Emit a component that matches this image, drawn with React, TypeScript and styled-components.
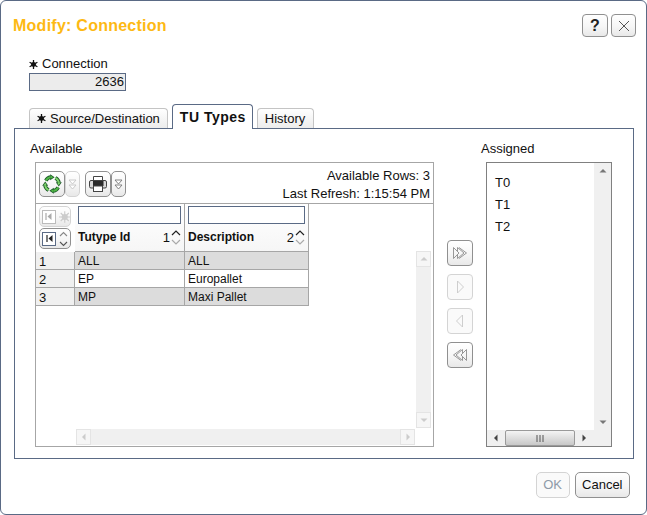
import styled, { createGlobalStyle } from 'styled-components';

const GlobalStyle = createGlobalStyle`
  html, body { margin: 0; padding: 0; background: #fff; }
  body { font-family: "Liberation Sans", Arial, sans-serif; font-size: 13px; color: #111; }
`;

const rows = [
  { id: 'ALL', description: 'ALL' },
  { id: 'EP', description: 'Europallet' },
  { id: 'MP', description: 'Maxi Pallet' },
];

const RequiredStar = () => (
  <StarIcon width="9" height="9" viewBox="0 0 9 9">
    <path d="M4.5 0v9M0.6 2.2l7.8 4.6M0.6 6.8l7.8-4.6" stroke="#111" strokeWidth="1.3" />
    <circle cx="4.5" cy="4.5" r="2.4" fill="#111" />
  </StarIcon>
);

// four green arrows chasing each other round a ring
const RefreshIcon = () => {
  const arcs = [0, 90, 180, 270];
  return (
    <svg width="22" height="22" viewBox="0 0 22 22">
      {arcs.map(angle => (
        <g key={angle} transform={`rotate(${angle} 11 11)`}>
          <path d="M4.8 7.6A7.2 7.2 0 0 1 9.6 4" fill="none" stroke="#1d5a28" strokeWidth="3.6" />
          <path d="M9.2 1.2l4.4 3-4.4 3z" fill="#1d5a28" />
          <path d="M4.8 7.6A7.2 7.2 0 0 1 9.6 4" fill="none" stroke={angle % 180 === 0 ? '#4fb845' : '#7fd66c'} strokeWidth="2" />
          <path d="M9.8 2.6l2.4 1.6-2.4 1.6z" fill={angle % 180 === 0 ? '#4fb845' : '#7fd66c'} />
        </g>
      ))}
    </svg>
  );
};

const PrintIcon = () => (
  <svg width="20" height="18" viewBox="0 0 20 18">
    <path d="M5.5 6V1.5h9V6" fill="#fff" stroke="#444" />
    <rect x="1.5" y="5.5" width="17" height="7.5" rx="1.5" fill="#d8d8d8" stroke="#444" />
    <path d="M5 6h10.5v5H5z" fill="#2b2b2b" />
    <rect x="5.5" y="11" width="9" height="5.5" fill="#fff" stroke="#444" />
  </svg>
);

const DoubleChevron = ({ muted }: { muted?: boolean }) => (
  <svg width="9" height="11" viewBox="0 0 9 11">
    <path d="M1 1h7L4.5 5zM1 6h7L4.5 10z" fill="#fff" stroke={muted ? '#c4c4c4' : '#777'} strokeWidth="0.9" />
  </svg>
);

const FirstIcon = ({ muted }: { muted?: boolean }) => (
  <FirstBox $muted={muted}>
    <svg width="9" height="9" viewBox="0 0 9 9">
      <path d="M2 1v7" stroke={muted ? '#aaa' : '#222'} strokeWidth="1.2" />
      <path d="M7.5 1v7L3.5 4.5z" fill={muted ? '#aaa' : '#222'} />
    </svg>
  </FirstBox>
);

const SortArrows = () => (
  <svg width="10" height="18" viewBox="0 0 10 18">
    <path d="M1 7l4-4 4 4" fill="none" stroke="#222" strokeWidth="1.2" />
    <path d="M1 12l4 4 4-4" fill="none" stroke="#aaa" strokeWidth="1.2" />
  </svg>
);

const MoveIcon = ({ dir, double, muted }: { dir: 'left' | 'right'; double?: boolean; muted?: boolean }) => {
  const stroke = muted ? '#c8c8c8' : '#8c8c8c';
  return (
    <svg width="18" height="18" viewBox="0 0 18 18">
      <g transform={dir === 'left' ? 'translate(18 0) scale(-1 1)' : undefined} fill="none" stroke={stroke} strokeWidth="0.9">
        {double ? (
          <>
            <path d="M2.5 3.5v11l5.5-5.5z" />
            <path d="M6.5 3.5v3.5M6.5 11v3.5l6.5-5.5-6.5-5.5" />
            <path d="M8 3.5l7.5 5.5L8 14.5" />
          </>
        ) : (
          <path d="M6.5 3v12l6-6z" />
        )}
      </g>
    </svg>
  );
};

const Tri = ({ dir, color = '#777' }: { dir: 'up' | 'down' | 'left' | 'right'; color?: string }) => {
  const d = {
    up: 'M1.5 6.5L5 3l3.5 3.5z',
    down: 'M1.5 3.5L5 7l3.5-3.5z',
    left: 'M6.5 1.5L3 5l3.5 3.5z',
    right: 'M3.5 1.5L7 5 3.5 8.5z',
  }[dir];
  return (
    <svg width="10" height="10" viewBox="0 0 10 10">
      <path d={d} fill={color} />
    </svg>
  );
};

const App = () => {
  return (
    <>
      <GlobalStyle />
      <Dialog>
        <TitleBar>
          <Title>Modify: Connection</Title>
          <TitleActions>
            <IconButton><HelpMark>?</HelpMark></IconButton>
            <IconButton $narrow>
              <svg width="12" height="12" viewBox="0 0 12 12">
                <path d="M1 1l10 10M11 1L1 11" stroke="#555" strokeWidth="1" fill="none" />
              </svg>
            </IconButton>
          </TitleActions>
        </TitleBar>

        <Field>
          <FieldLabel><RequiredStar />Connection</FieldLabel>
          <ReadOnlyValue>2636</ReadOnlyValue>
        </Field>

        <TabStrip>
          <Tab $padding="0 7px"><RequiredStar />Source/Destination</Tab>
          <Tab $active $padding="0 6px 0 7px">TU Types</Tab>
          <Tab $padding="0 8px 0 7px">History</Tab>
        </TabStrip>

        <TabPanel>
          <AvailableColumn>
            <ColumnLabel>Available</ColumnLabel>
            <GridBox>
              <Toolbar>
                <ToolGroup>
                  <ToolButton><RefreshIcon /></ToolButton>
                  <MenuButton $muted><DoubleChevron muted /></MenuButton>
                </ToolGroup>
                <ToolGroup>
                  <ToolButton><PrintIcon /></ToolButton>
                  <MenuButton><DoubleChevron /></MenuButton>
                </ToolGroup>
                <ToolbarInfo>
                  <div>Available Rows: 3</div>
                  <div>Last Refresh: 1:15:54 PM</div>
                </ToolbarInfo>
              </Toolbar>

              <GridBody>
                <CornerCell>
                  <CornerButton $muted>
                    <FirstIcon muted />
                    <svg width="12" height="12" viewBox="0 0 12 12">
                      <path d="M6 0v12M0 6h12M1.8 1.8l8.4 8.4M10.2 1.8l-8.4 8.4" stroke="#ccc" strokeWidth="1.2" />
                      <circle cx="6" cy="6" r="3.2" fill="#ccc" />
                    </svg>
                  </CornerButton>
                  <CornerButton>
                    <FirstIcon />
                    <CornerSort>
                      <svg width="9" height="18" viewBox="0 0 9 18">
                        <path d="M1 6l3.5-3.5L8 6" fill="none" stroke="#888" strokeWidth="1.1" />
                        <path d="M1 12l3.5 3.5L8 12" fill="none" stroke="#555" strokeWidth="1.1" />
                      </svg>
                    </CornerSort>
                  </CornerButton>
                </CornerCell>

                <HeaderRow>
                  <HeaderCell $width={110}>
                    <FilterInput $width={103} />
                    <HeaderLine>
                      <HeaderName>Tutype Id</HeaderName>
                      <SortIndex>1</SortIndex>
                      <SortArrows />
                    </HeaderLine>
                  </HeaderCell>
                  <HeaderCell $width={124}>
                    <FilterInput $width={117} />
                    <HeaderLine>
                      <HeaderName>Description</HeaderName>
                      <SortIndex>2</SortIndex>
                      <SortArrows />
                    </HeaderLine>
                  </HeaderCell>
                </HeaderRow>
                <HeaderFiller />

                <RowNumbers>
                  {rows.map((row, i) => (
                    <RowNumber key={row.id}>{i + 1}</RowNumber>
                  ))}
                </RowNumbers>

                <DataRows>
                  {rows.map((row, i) => (
                    <DataRow key={row.id} $shaded={i % 2 === 0}>
                      <DataCell $width={110}>{row.id}</DataCell>
                      <DataCell $width={124}>{row.description}</DataCell>
                    </DataRow>
                  ))}
                </DataRows>

                <VerticalTrack>
                  <TrackButton><Tri dir="up" color="#ccc" /></TrackButton>
                  <TrackButton><Tri dir="down" color="#ccc" /></TrackButton>
                </VerticalTrack>

                <BottomSpacer />
                <HorizontalTrack>
                  <TrackButton><Tri dir="left" color="#ccc" /></TrackButton>
                  <TrackButton><Tri dir="right" color="#ccc" /></TrackButton>
                </HorizontalTrack>
              </GridBody>
            </GridBox>
          </AvailableColumn>

          <MoveColumn>
            <MoveButton><MoveIcon dir="right" double /></MoveButton>
            <MoveButton $disabled><MoveIcon dir="right" muted /></MoveButton>
            <MoveButton $disabled><MoveIcon dir="left" muted /></MoveButton>
            <MoveButton><MoveIcon dir="left" double /></MoveButton>
          </MoveColumn>

          <AssignedColumn>
            <ColumnLabel>Assigned</ColumnLabel>
            <ListBox>
              <ListInner>
                <ListItems>
                  <ListItem>T0</ListItem>
                  <ListItem>T1</ListItem>
                  <ListItem>T2</ListItem>
                </ListItems>
                <ListVertical>
                  <Tri dir="up" />
                  <Tri dir="down" />
                </ListVertical>
              </ListInner>
              <ListHorizontal>
                <ListArrow><Tri dir="left" color="#444" /></ListArrow>
                <ListThumb>
                  <svg width="9" height="7" viewBox="0 0 9 7">
                    <path d="M1 0v7M4 0v7M7 0v7" stroke="#555" strokeWidth="1" />
                  </svg>
                </ListThumb>
                <ListArrow><Tri dir="right" color="#444" /></ListArrow>
                <ListCorner />
              </ListHorizontal>
            </ListBox>
          </AssignedColumn>
        </TabPanel>

        <Footer>
          <FooterButton $disabled>OK</FooterButton>
          <FooterButton>Cancel</FooterButton>
        </Footer>
      </Dialog>
    </>
  );
};

const buttonFace = 'linear-gradient(#ffffff 0%, #f6f6f6 55%, #e8e8e8 100%)';

const Dialog = styled.div`
  box-sizing: border-box;
  width: 647px;
  height: 515px;
  border: 1px solid #5a6a85;
  border-radius: 6px;
  background: #fff;
  overflow: hidden;
  display: flex;
  flex-direction: column;
`;

const TitleBar = styled.div`
  height: 36px;
  padding: 13px 10px 0 12px;
  display: flex;
  justify-content: space-between;
  align-items: flex-start;
`;

const Title = styled.div`
  font-size: 16px;
  font-weight: 700;
  letter-spacing: 0.25px;
  color: #fdb913;
  line-height: 23px;
`;

const TitleActions = styled.div`
  display: flex;
  gap: 3px;
`;

const IconButton = styled.div<{ $narrow?: boolean }>`
  box-sizing: border-box;
  width: ${props => (props.$narrow ? '25px' : '26px')};
  height: 23px;
  border: 1px solid #909090;
  border-radius: 4px;
  background: ${buttonFace};
  display: flex;
  align-items: center;
  justify-content: center;
`;

const HelpMark = styled.span`
  font-size: 16px;
  font-weight: 700;
  color: #222;
`;

const Field = styled.div`
  margin: 5px 0 0 28px;
`;

const StarIcon = styled.svg`
  margin-right: 4px;
  flex: none;
`;

const FieldLabel = styled.div`
  height: 18px;
  line-height: 18px;
  display: flex;
  align-items: center;
`;

const ReadOnlyValue = styled.div`
  box-sizing: border-box;
  width: 97px;
  height: 18px;
  border: 1px solid #5a6a85;
  background: #ececec;
  line-height: 16px;
  text-align: right;
  padding-right: 1px;
`;

const TabStrip = styled.div`
  margin: 13px 0 0 28px;
  height: 24px;
  display: flex;
  align-items: flex-end;
  gap: 4px;
`;

const Tab = styled.div<{ $active?: boolean; $padding: string }>`
  box-sizing: border-box;
  height: ${props => (props.$active ? '25px' : '20px')};
  padding: ${props => props.$padding};
  border: 1px solid ${props => (props.$active ? '#5a6a85' : '#c4c4c4')};
  border-bottom: none;
  border-radius: 4px 4px 0 0;
  background: ${props => (props.$active ? '#fff' : 'linear-gradient(#ffffff, #ececec)')};
  font-weight: ${props => (props.$active ? 700 : 400)};
  font-size: ${props => (props.$active ? '14px' : '13px')};
  letter-spacing: ${props => (props.$active ? '0.5px' : '0')};
  display: flex;
  align-items: center;
  position: relative;
  z-index: ${props => (props.$active ? 1 : 0)};
  margin-bottom: ${props => (props.$active ? '-1px' : '0')};
`;

const TabPanel = styled.div`
  box-sizing: border-box;
  margin-left: 13px;
  width: 620px;
  height: 331px;
  border: 1px solid #5a6a85;
  padding: 12px 0 0 15px;
  display: flex;
`;

const ColumnLabel = styled.div`
  height: 18px;
  line-height: 16px;
  margin-bottom: 3px;
`;

const AvailableColumn = styled.div`
  width: 404px;
`;

const GridBox = styled.div`
  box-sizing: border-box;
  margin-left: 5px;
  width: 399px;
  height: 285px;
  border: 1px solid #a6a6a6;
  display: flex;
  flex-direction: column;
`;

const Toolbar = styled.div`
  box-sizing: border-box;
  height: 41px;
  padding-top: 8px;
  padding-left: 3px;
  border-bottom: 1px solid #a6a6a6;
  display: flex;
  gap: 5px;
`;

const ToolGroup = styled.div`
  display: flex;
`;

const ToolButton = styled.div`
  box-sizing: border-box;
  width: 26px;
  height: 26px;
  border: 1px solid #909090;
  border-radius: 5px;
  background: ${buttonFace};
  display: flex;
  align-items: center;
  justify-content: center;
`;

const MenuButton = styled.div<{ $muted?: boolean }>`
  box-sizing: border-box;
  width: 15px;
  height: 26px;
  border: 1px solid ${props => (props.$muted ? '#d4d4d4' : '#909090')};
  border-radius: 5px;
  background: ${buttonFace};
  display: flex;
  align-items: center;
  justify-content: center;
`;

const ToolbarInfo = styled.div`
  margin: -4px 3px 0 auto;
  text-align: right;
  line-height: 18px;
`;

const GridBody = styled.div`
  flex: 1;
  display: grid;
  grid-template-columns: 39px 341px 17px;
  grid-template-rows: 48px 177px 16px;
`;

const CornerCell = styled.div`
  box-sizing: border-box;
  padding: 2px 4px 0 3px;
  display: flex;
  flex-direction: column;
  gap: 1px;
  background: #fff;
`;

const CornerButton = styled.div<{ $muted?: boolean }>`
  box-sizing: border-box;
  height: 21px;
  border: 1px solid ${props => (props.$muted ? '#d4d4d4' : '#909090')};
  border-radius: 5px;
  background: ${buttonFace};
  display: flex;
  align-items: center;
  padding-left: 2px;
  gap: 3px;
`;

const CornerSort = styled.div`
  display: flex;
  align-items: center;
`;

const FirstBox = styled.div<{ $muted?: boolean }>`
  box-sizing: border-box;
  width: 14px;
  height: 14px;
  border: 1px solid ${props => (props.$muted ? '#bbb' : '#5a6a85')};
  background: #fff;
  display: flex;
  align-items: center;
  justify-content: center;
`;

const HeaderRow = styled.div`
  display: flex;
  background: #fff;
`;

const HeaderCell = styled.div<{ $width: number }>`
  box-sizing: border-box;
  width: ${props => props.$width}px;
  border-right: 1px solid #a6a6a6;
  border-bottom: 1px solid #a6a6a6;
  background: linear-gradient(#ffffff, #f6f6f6);
  padding: 2px 3px 0 3px;
`;

const FilterInput = styled.div<{ $width: number }>`
  box-sizing: border-box;
  width: ${props => props.$width}px;
  height: 18px;
  border: 1px solid #5a6a85;
  background: #fff;
`;

const HeaderLine = styled.div`
  height: 24px;
  margin-top: 1px;
  display: flex;
  align-items: center;
`;

const HeaderName = styled.div`
  flex: 1;
  font-size: 12px;
  font-weight: 700;
`;

const SortIndex = styled.div`
  margin-right: 1px;
`;

const HeaderFiller = styled.div``;

const RowNumbers = styled.div`
  display: flex;
  flex-direction: column;
  align-self: start;
`;

const RowNumber = styled.div`
  box-sizing: border-box;
  height: 18px;
  line-height: 19px;
  padding-left: 3px;
  background: #f0f0f0;
  border-right: 1px solid #a6a6a6;
  border-bottom: 1px solid #a6a6a6;
`;

const DataRows = styled.div`
  display: flex;
  flex-direction: column;
`;

const DataRow = styled.div<{ $shaded: boolean }>`
  display: flex;
  height: 18px;
  background: ${props => (props.$shaded ? '#dcdcdc' : '#fff')};
  width: 234px;
`;

const DataCell = styled.div<{ $width: number }>`
  box-sizing: border-box;
  width: ${props => props.$width}px;
  padding-left: 3px;
  font-size: 12px;
  line-height: 19px;
  border-right: 1px solid #a6a6a6;
  border-bottom: 1px solid #a6a6a6;
`;

const VerticalTrack = styled.div`
  background: #f0f0f0;
  margin: -1px 2px 1px 0;
  display: flex;
  flex-direction: column;
  justify-content: space-between;
`;

const HorizontalTrack = styled.div`
  background: #f0f0f0;
  margin: 0 1px;
  display: flex;
  justify-content: space-between;
`;

const BottomSpacer = styled.div``;

const TrackButton = styled.div`
  box-sizing: border-box;
  width: 15px;
  height: 16px;
  background: #f6f6f6;
  border: 1px solid #e4e4e4;
  display: flex;
  align-items: center;
  justify-content: center;
`;

const MoveColumn = styled.div`
  width: 26px;
  margin: 99px 8px 0 13px;
  display: flex;
  flex-direction: column;
  gap: 8px;
`;

const MoveButton = styled.div<{ $disabled?: boolean }>`
  box-sizing: border-box;
  width: 26px;
  height: 26px;
  border: 1px solid ${props => (props.$disabled ? '#d4d4d4' : '#909090')};
  border-radius: 4px;
  background: ${props => (props.$disabled ? '#fafafa' : buttonFace)};
  display: flex;
  align-items: center;
  justify-content: center;
`;

const AssignedColumn = styled.div`
  width: 131px;
`;

const ListBox = styled.div`
  box-sizing: border-box;
  margin-left: 5px;
  width: 126px;
  height: 285px;
  border: 1px solid #808080;
  display: flex;
  flex-direction: column;
`;

const ListInner = styled.div`
  flex: 1;
  display: flex;
`;

const ListItems = styled.div`
  flex: 1;
  padding: 9px 8px 0;
`;

const ListItem = styled.div`
  height: 22px;
  line-height: 22px;
`;

const ListVertical = styled.div`
  width: 17px;
  background: #f0f0f0;
  padding: 3px 0;
  display: flex;
  flex-direction: column;
  justify-content: space-between;
  align-items: center;
`;

const ListHorizontal = styled.div`
  height: 16px;
  display: flex;
  background: #f0f0f0;
`;

const ListArrow = styled.div`
  width: 18px;
  display: flex;
  align-items: center;
  justify-content: center;
`;

const ListThumb = styled.div`
  box-sizing: border-box;
  width: 70px;
  border: 1px solid #9a9a9a;
  border-radius: 2px;
  background: linear-gradient(#f4f4f4, #c8c8c8);
  display: flex;
  align-items: center;
  justify-content: center;
`;

const ListCorner = styled.div`
  flex: 1;
`;

const Footer = styled.div`
  margin-top: 13px;
  padding-right: 16px;
  display: flex;
  justify-content: flex-end;
  gap: 5px;
`;

const FooterButton = styled.div<{ $disabled?: boolean }>`
  box-sizing: border-box;
  height: 26px;
  padding: 0 6.5px;
  border: 1px solid ${props => (props.$disabled ? '#d4d4d4' : '#909090')};
  border-radius: 5px;
  background: ${props => (props.$disabled ? '#fafafa' : buttonFace)};
  color: ${props => (props.$disabled ? '#8e9aa8' : '#111')};
  line-height: 24px;
  font-size: 13px;
`;

export default App;
